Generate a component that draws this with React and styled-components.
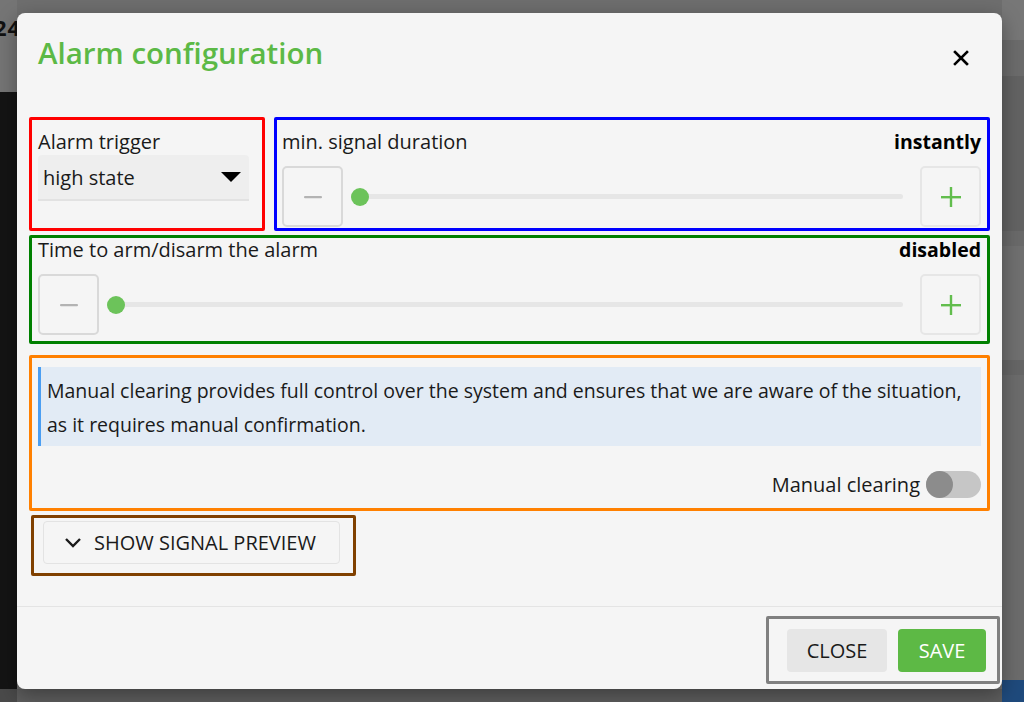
import React from "react";
import styled, { createGlobalStyle } from "styled-components";

const GlobalStyle = createGlobalStyle`
  html, body { margin: 0; padding: 0; }
  body { font-family: "Open Sans", "Noto Sans", sans-serif; background: #6e6e6e; }
  * { box-sizing: border-box; }
`;

const Page = styled.div`
  position: relative;
  width: 1024px;
  height: 702px;
  overflow: hidden;
  background: #6e6e6e;
  display: grid;
  grid-template-columns: 17px 1fr 22px;
`;

const BgColumn = styled.div`
  display: flex;
  flex-direction: column;
`;

const BgStripe = styled.div`
  height: ${(p) => (p.$h ? `${p.$h}px` : "auto")};
  flex: ${(p) => (p.$h ? "none" : 1)};
  background: ${(p) => p.$c};
`;

const BgNumber = styled.div`
  height: 92px;
  background: #757575;
  padding-top: 14px;
  margin-left: -6px;
  font-weight: 700;
  font-size: 22px;
  line-height: 26px;
  color: #111;
  letter-spacing: 1px;
  white-space: nowrap;
`;

const Dialog = styled.div`
  position: absolute;
  left: 17px;
  top: 13px;
  width: 985px;
  height: 676px;
  background: #f5f5f5;
  border-radius: 8px;
  box-shadow: 0 6px 20px rgba(0, 0, 0, 0.35);
  display: flex;
  flex-direction: column;
`;

const Header = styled.div`
  display: flex;
  align-items: flex-start;
  justify-content: space-between;
  height: 104px;
  padding: 20px 33px 0 21px;
`;

const Title = styled.h2`
  margin: 0;
  font-size: 29.5px;
  line-height: 40px;
  font-weight: 600;
  color: #5cb946;
`;

const CloseX = styled.button`
  border: none;
  background: transparent;
  padding: 0;
  margin-top: 17px;
  width: 16px;
  height: 16px;
  display: flex;
  align-items: center;
  justify-content: center;
  cursor: pointer;
`;

const Content = styled.div`
  display: flex;
  flex-direction: column;
  padding: 0 12px;
`;

const TopRow = styled.div`
  display: flex;
  gap: 9px;
  margin-bottom: 4px;
`;

const Marked = styled.div`
  border: 3px solid ${(p) => p.$c};
  border-radius: 2px;
`;

const TriggerBox = styled(Marked)`
  flex: none;
  width: 236px;
  height: 114px;
  padding: 10px 13px 0 6px;
`;

const SliderBox = styled(Marked)`
  flex: ${(p) => (p.$grow ? "1 1 auto" : "none")};
  height: ${(p) => p.$h}px;
  padding: ${(p) => p.$pad};
  display: flex;
  flex-direction: column;
`;

const Label = styled.div`
  font-size: 20px;
  line-height: 24px;
  color: #1a1a1a;
`;

const LabelRow = styled.div`
  display: flex;
  justify-content: space-between;
  align-items: center;
  margin-bottom: 12px;
`;

const Value = styled.div`
  font-size: 19.5px;
  line-height: 24px;
  font-weight: 700;
  color: #000;
`;

const Select = styled.div`
  margin-top: 1px;
  height: 46px;
  background: #eeeeee;
  border-bottom: 2px solid #e2e2e2;
  border-radius: 4px 4px 0 0;
  display: flex;
  align-items: center;
  justify-content: space-between;
  padding: 0 8px 0 5px;
  font-size: 20px;
  color: #1a1a1a;
`;

const Controls = styled.div`
  display: flex;
  align-items: center;
`;

const StepButton = styled.button`
  flex: none;
  width: 61px;
  height: 61px;
  border: 2px solid ${(p) => (p.$disabled ? "#d9d9d9" : "#e6e6e6")};
  border-radius: 5px;
  background: #f5f5f5;
  display: flex;
  align-items: center;
  justify-content: center;
  padding: 0;
`;

const Track = styled.div`
  position: relative;
  flex: 1;
  height: 5px;
  margin: 0 17px 0 8px;
  background: #e6e6e6;
  border-radius: 3px;
`;

const Thumb = styled.div`
  position: absolute;
  left: 0;
  top: 50%;
  width: 18px;
  height: 18px;
  margin-top: -9px;
  border-radius: 50%;
  background: #6cc35a;
`;

const InfoSection = styled(Marked)`
  flex: none;
  height: 156px;
  margin-top: 11px;
  padding: 9px 6px 0 6px;
  display: flex;
  flex-direction: column;
`;

const InfoBox = styled.div`
  background: #e2ebf5;
  border-left: 3px solid #4a9ef2;
  padding: 7px 6px 4px 6px;
  font-size: 19.5px;
  line-height: 34px;
  color: #1a1a1a;
`;

const ToggleRow = styled.label`
  margin-top: auto;
  margin-bottom: 10px;
  display: flex;
  justify-content: flex-end;
  align-items: center;
  gap: 6px;
  font-size: 20px;
  color: #1a1a1a;
`;

const Switch = styled.span`
  position: relative;
  width: 55px;
  height: 27px;
  border-radius: 14px;
  background: #c6c6c6;
`;

const Knob = styled.span`
  position: absolute;
  left: 0;
  top: 0;
  width: 27px;
  height: 27px;
  border-radius: 50%;
  background: #8c8c8c;
`;

const PreviewBox = styled(Marked)`
  align-self: flex-start;
  width: 325px;
  height: 61px;
  margin: 4px 0 0 2px;
  padding: 3px 13px 9px 9px;
`;

const PreviewButton = styled.button`
  width: 100%;
  height: 100%;
  border: 1px solid #e3e3e3;
  border-radius: 4px;
  background: #f5f5f5;
  display: flex;
  align-items: center;
  gap: 12px;
  padding: 0 0 0 20px;
  font-family: inherit;
  font-size: 20px;
  color: #1a1a1a;
  text-transform: uppercase;
`;

const Footer = styled.div`
  margin-top: auto;
  border-top: 1px solid #e4e4e4;
  height: 83px;
  display: flex;
  justify-content: flex-end;
  padding: 9px 2px 0 0;
`;

const ActionsBox = styled(Marked)`
  display: flex;
  gap: 11px;
  height: 68px;
  padding: 10px 11px 0 18px;
  border-color: #808080;
`;

const ActionButton = styled.button`
  height: 43px;
  width: ${(p) => p.$w}px;
  border: none;
  border-radius: 4px;
  background: ${(p) => (p.$primary ? "#5db945" : "#e6e6e6")};
  color: ${(p) => (p.$primary ? "#ffffff" : "#1a1a1a")};
  font-family: inherit;
  font-size: 20px;
  text-transform: uppercase;
  padding: 0;
`;

const MinusIcon = () => (
  <svg width="18" height="4" viewBox="0 0 18 4">
    <rect x="0" y="1" width="18" height="2.2" rx="1" fill="#b3b3b3" />
  </svg>
);

const PlusIcon = () => (
  <svg width="20" height="20" viewBox="0 0 20 20">
    <rect x="0" y="9" width="20" height="2.4" fill="#62bd4d" />
    <rect x="8.8" y="0" width="2.4" height="20" fill="#62bd4d" />
  </svg>
);

const SliderControl = () => (
  <Controls>
    <StepButton $disabled>
      <MinusIcon />
    </StepButton>
    <Track>
      <Thumb />
    </Track>
    <StepButton>
      <PlusIcon />
    </StepButton>
  </Controls>
);

export default function App() {
  return (
    <>
      <GlobalStyle />
      <Page>
        <BgColumn>
          <BgNumber>24</BgNumber>
          <BgStripe $c="#141414" />
          <BgStripe $h={13} $c="#4a4a4a" />
        </BgColumn>
        <BgColumn>
          <BgStripe $c="#6e6e6e" />
          <BgStripe $h={13} $c="#5e5e5e" />
        </BgColumn>
        <BgColumn>
          <BgStripe $h={40} $c="#777777" />
          <BgStripe $h={36} $c="#6c6c6c" />
          <BgStripe $h={155} $c="#636363" />
          <BgStripe $h={15} $c="#6a6a6a" />
          <BgStripe $h={114} $c="#707070" />
          <BgStripe $h={15} $c="#666666" />
          <BgStripe $c="#6c6c6c" />
          <BgStripe $h={22} $c="#1f4a7c" />
        </BgColumn>
        <Dialog>
          <Header>
            <Title>Alarm configuration</Title>
            <CloseX aria-label="close">
              <svg width="16" height="16" viewBox="0 0 16 16">
                <path d="M2 2 L14 14 M14 2 L2 14" stroke="#000" strokeWidth="2.6" strokeLinecap="square" />
              </svg>
            </CloseX>
          </Header>
          <Content>
            <TopRow>
              <TriggerBox $c="#ff0000">
                <Label>Alarm trigger</Label>
                <Select>
                  <span>high state</span>
                  <svg width="20" height="10" viewBox="0 0 20 10">
                    <path d="M0 0 L20 0 L10 10 Z" fill="#000" />
                  </svg>
                </Select>
              </TriggerBox>
              <SliderBox $grow $c="#0000ff" $h={114} $pad="10px 6px 0 5px">
                <LabelRow>
                  <Label>min. signal duration</Label>
                  <Value>instantly</Value>
                </LabelRow>
                <SliderControl />
              </SliderBox>
            </TopRow>
            <SliderBox $c="#008000" $h={109} $pad="0 6px 0 6px">
              <LabelRow>
                <Label>Time to arm/disarm the alarm</Label>
                <Value>disabled</Value>
              </LabelRow>
              <SliderControl />
            </SliderBox>
            <InfoSection $c="#ff8000">
              <InfoBox>
                Manual clearing provides full control over the system and ensures that we are aware of the situation,
                as it requires manual confirmation.
              </InfoBox>
              <ToggleRow>
                Manual clearing
                <Switch>
                  <Knob />
                </Switch>
              </ToggleRow>
            </InfoSection>
            <PreviewBox $c="#804000">
              <PreviewButton>
                <svg width="18" height="11" viewBox="0 0 18 11">
                  <path d="M2 2 L9 9 L16 2" fill="none" stroke="#1a1a1a" strokeWidth="2.4" />
                </svg>
                Show signal preview
              </PreviewButton>
            </PreviewBox>
          </Content>
          <Footer>
            <ActionsBox>
              <ActionButton $w={100}>Close</ActionButton>
              <ActionButton $w={88} $primary>
                Save
              </ActionButton>
            </ActionsBox>
          </Footer>
        </Dialog>
      </Page>
    </>
  );
}
